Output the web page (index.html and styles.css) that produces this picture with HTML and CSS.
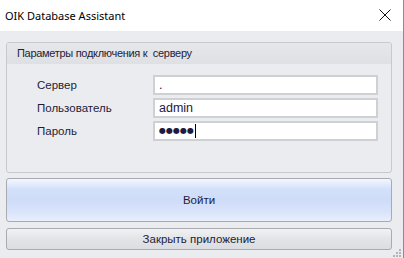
FILE: index.html
```html
<!DOCTYPE html>
<html lang="ru">
<head>
    <meta charset="UTF-8">
    <title>OIK Database Assistant</title>
    <link rel="stylesheet" href="styles.css">
</head>
<body>
    <div class="window">
        <div class="titlebar">
            <span class="title">OIK Database Assistant</span>
            <svg class="close-icon" width="12" height="12" viewBox="0 0 12 12">
                <path d="M0.5 0.5 L11.5 11.5 M11.5 0.5 L0.5 11.5" stroke="#111" stroke-width="1" fill="none"/>
            </svg>
        </div>
        <div class="client">
            <div class="group">
                <div class="group-header">Параметры подключения к&nbsp; серверу</div>
                <div class="group-body">
                    <div class="field-row">
                        <label class="field-label">Сервер</label>
                        <div class="field-input">.</div>
                    </div>
                    <div class="field-row">
                        <label class="field-label">Пользователь</label>
                        <div class="field-input">admin</div>
                    </div>
                    <div class="field-row">
                        <label class="field-label">Пароль</label>
                        <div class="field-input"><span class="dots">●●●●●</span><span class="caret"></span></div>
                    </div>
                </div>
            </div>
            <button class="btn btn-login">Войти</button>
            <button class="btn btn-close">Закрыть приложение</button>
            <div class="grip">
                <i></i><i></i><i></i><i></i><i></i><i></i>
            </div>
        </div>
    </div>
</body>
</html>
```

FILE: styles.css
```css
body {
    margin: 0;
    font-family: 'Liberation Sans', sans-serif;
    background: #ffffff;
}
.window {
    width: 403px;
    height: 258px;
    border-right: 1px solid #8c8c8c;
    display: flex;
    flex-direction: column;
    position: relative;
    overflow: hidden;
}
.titlebar {
    height: 31px;
    flex: none;
    background: #ffffff;
    display: flex;
    align-items: center;
    justify-content: space-between;
    padding: 0 12px 0 5px;
}
.title {
    font-family: 'Noto Sans', sans-serif;
    font-size: 11px;
    color: #000;
    margin-top: -1px;
}
.close-icon {
    display: block;
    margin-top: -1px;
}
.client {
    flex: 1;
    background: #ebecf0;
    padding: 11px 11px 0 6px;
    display: flex;
    flex-direction: column;
}
.group {
    height: 129px;
    border: 1px solid #c8c9cd;
    border-radius: 3px;
    background: #ebecf0;
    display: flex;
    flex-direction: column;
}
.group-header {
    height: 21px;
    line-height: 21px;
    padding-left: 10px;
    background: linear-gradient(#e6e7eb, #dfe0e4);
    font-size: 11px;
    letter-spacing: -0.3px;
    color: #22223a;
    border-radius: 2px 2px 0 0;
}
.group-body {
    padding: 11px 0 0 30px;
    display: flex;
    flex-direction: column;
    gap: 3px;
}
.field-row {
    display: flex;
    align-items: center;
    height: 20px;
}
.field-label {
    width: 116px;
    font-size: 11.5px;
    color: #1c1c38;
}
.field-input {
    width: 217px;
    height: 16px;
    border: 2px solid #cfd0d4;
    background: #ffffff;
    font-size: 12.5px;
    line-height: 16px;
    padding-left: 4px;
    color: #1c1c40;
    display: flex;
    align-items: center;
}
.dots {
    font-family: 'DejaVu Sans', sans-serif;
    font-size: 8px;
    color: #1c1c40;
}
.caret {
    width: 1px;
    height: 14px;
    background: #000;
    margin-left: 1px;
}
.btn {
    display: block;
    width: 100%;
    border: 1px solid #a9abb1;
    border-radius: 3px;
    font-family: 'Liberation Sans', sans-serif;
    font-size: 11.5px;
    color: #1c1c38;
    padding: 0;
}
.btn-login {
    margin-top: 5px;
    height: 44px;
    background: linear-gradient(#f4f7fe 0%, #d3e0fa 25%, #cfdcf8 50%, #dae5fa 80%, #e9effc 100%);
}
.btn-close {
    margin-top: 6px;
    height: 22px;
    background: linear-gradient(#f2f2f4 0%, #e3e4e7 50%, #dcdde0 100%);
}
.grip {
    position: absolute;
    right: 2px;
    bottom: 1px;
    width: 8px;
    height: 8px;
    display: grid;
    grid-template-columns: repeat(3, 2px);
    grid-template-rows: repeat(3, 2px);
    gap: 1px;
}
.grip i {
    background: #b4b5b9;
}
.grip i:nth-child(1) { grid-column: 3; grid-row: 1; }
.grip i:nth-child(2) { grid-column: 2; grid-row: 2; }
.grip i:nth-child(3) { grid-column: 3; grid-row: 2; }
.grip i:nth-child(4) { grid-column: 1; grid-row: 3; }
.grip i:nth-child(5) { grid-column: 2; grid-row: 3; }
.grip i:nth-child(6) { grid-column: 3; grid-row: 3; }
```
